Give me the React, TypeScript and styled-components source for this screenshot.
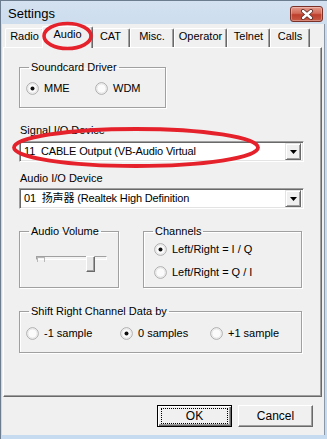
import React, { FC } from 'react'
import styled, { createGlobalStyle } from 'styled-components'

const GlobalStyle = createGlobalStyle`
	html, body {
		margin: 0;
		padding: 0;
		background: #cfdeef;
	}
	body {
		font-family: 'Liberation Sans', Arial, 'Noto Sans CJK SC', sans-serif;
		font-size: 11px;
		color: #000;
	}
`

const Window = styled.div`
	position: relative;
	width: 327px;
	height: 439px;
	box-sizing: border-box;
	display: flex;
	flex-direction: column;
	padding: 0 3px 4px 1px;
	background: linear-gradient(#d3e1f0, #c9daed 40px, #c6dbef);
	border-top: 1px solid #6d7d90;
	border-left: 1px solid #6d7d90;
	overflow: hidden;
`

const TitleBar = styled.div`
	height: 23px;
	display: flex;
	align-items: flex-start;
	justify-content: space-between;
	padding: 0 1px 0 6px;
`

const Title = styled.span`
	margin-top: 5px;
	font-size: 13px;
	line-height: 15px;
	color: #000;
`

const CloseButton = styled.div`
	margin-top: 5px;
	width: 33px;
	height: 16px;
	box-sizing: border-box;
	border: 1px solid #7a3128;
	border-radius: 3px;
	background: linear-gradient(#e49a8b, #d26a58 45%, #bd3f2c 55%, #c85a45);
	box-shadow: inset 0 0 0 1px rgba(255, 255, 255, 0.3);
	display: flex;
	align-items: center;
	justify-content: center;
`

const Client = styled.div`
	flex: 1;
	display: flex;
	flex-direction: column;
	background: #f0f0f0;
	box-shadow: 1px 0 #8a97a6;
`

const TabStrip = styled.div`
	height: 23px;
	display: flex;
	align-items: flex-end;
	padding-left: 3px;
`

const Tab = styled.div<{ $w: number; $active?: boolean }>`
	position: relative;
	box-sizing: border-box;
	width: ${p => p.$w + (p.$active ? 4 : 0)}px;
	height: ${p => (p.$active ? 22 : 19)}px;
	margin: 0 ${p => (p.$active ? -2 : 0)}px ${p => (p.$active ? -1 : 0)}px;
	z-index: ${p => (p.$active ? 2 : 1)};
	padding-top: 1px;
	background: #f0f0f0;
	border-top: 1px solid #fff;
	border-left: 1px solid #fff;
	border-right: 1px solid #696969;
	border-radius: 2px 2px 0 0;
	box-shadow: inset -1px 0 #a0a0a0;
	line-height: 13px;
	text-align: center;
	white-space: nowrap;
`

const TabPage = styled.div`
	height: 350px;
	box-sizing: border-box;
	margin: 0 2px 0 1px;
	padding: 0 0 0 15px;
	border-top: 1px solid #fff;
	border-left: 1px solid #fff;
	border-right: 1px solid #696969;
	border-bottom: 1px solid #696969;
	box-shadow: inset -1px -1px #a0a0a0;
	display: flex;
	flex-direction: column;
	align-items: flex-start;
`

const GroupBox = styled.fieldset<{ $w: number; $top: number }>`
	box-sizing: border-box;
	width: ${p => p.$w}px;
	margin: ${p => p.$top}px 0 0;
	padding: 0;
	min-width: 0;
	border: 1px solid #a0a0a0;
	box-shadow: 1px 1px #fff, inset 1px 1px #fff;
`

const Legend = styled.legend`
	margin-left: 9px;
	padding: 0 2px;
	line-height: 13px;
`

const RadioGrid = styled.div<{ $cols: string; $pt: number; $pb: number }>`
	display: grid;
	grid-template-columns: ${p => p.$cols};
	padding: ${p => p.$pt}px 0 ${p => p.$pb}px ${p => (p.$cols === '1fr' ? 10 : 6)}px;
	row-gap: 10px;
`

const RadioItem = styled.label`
	display: flex;
	align-items: center;
	height: 13px;
	line-height: 13px;
	white-space: nowrap;
`

const RadioDot = styled.svg`
	flex: none;
	margin-right: 5px;
`

const FieldLabel = styled.div<{ $top: number }>`
	margin: ${p => p.$top}px 0 0 1px;
	line-height: 13px;
`

const Combo = styled.div<{ $top: number }>`
	box-sizing: border-box;
	width: 285px;
	height: 21px;
	margin-top: ${p => p.$top}px;
	display: flex;
	align-items: center;
	background: #fff;
	border: 1px solid;
	border-color: #a0a0a0 #fff #fff #a0a0a0;
	box-shadow: inset 1px 1px #696969, inset -1px -1px #e3e3e3;
	padding: 2px 2px 2px 4px;
`

const ComboText = styled.span`
	flex: 1;
	white-space: pre;
	line-height: 13px;
	letter-spacing: -0.15px;
	overflow: hidden;
`

const DropButton = styled.div`
	box-sizing: border-box;
	width: 16px;
	height: 17px;
	background: #f0f0f0;
	border: 1px solid;
	border-color: #e3e3e3 #696969 #696969 #e3e3e3;
	box-shadow: inset 1px 1px #fff, inset -1px -1px #a0a0a0;
	display: flex;
	align-items: center;
	justify-content: center;
`

const GroupRow = styled.div`
	display: flex;
	gap: 24px;
	margin-top: 16px;
`

const SliderBox = styled.div`
	position: relative;
	width: 71px;
	height: 16px;
	margin: 18px 0 8px 16px;
`

const Track = styled.div`
	margin-top: 4px;
	height: 4px;
	box-sizing: border-box;
	border: 1px solid;
	border-color: #a0a0a0 #fff #fff #a0a0a0;
	background: #f4f4f4;
`

const Tick = styled.div`
	position: absolute;
	left: 1px;
	top: 1px;
	width: 6px;
	height: 4px;
	border: 1px solid #b8b8b8;
	border-bottom: none;
`

const Thumb = styled.div`
	position: absolute;
	top: 0;
	width: 9px;
	height: 16px;
	box-sizing: border-box;
	background: #e8e8e8;
	border: 1px solid;
	border-color: #fff #696969 #696969 #fff;
	box-shadow: inset -1px -1px #a0a0a0;
`

const ButtonRow = styled.div`
	display: flex;
	justify-content: flex-end;
	gap: 6px;
	padding: 8px 11px 8px 0;
`

const PushButton = styled.button<{ $default?: boolean }>`
	box-sizing: border-box;
	width: 75px;
	height: 22px;
	padding: 0;
	font-family: inherit;
	font-size: 12px;
	color: #000;
	background: #f0f0f0;
	border: 1px solid;
	border-color: ${p => (p.$default ? '#000' : '#fff #696969 #696969 #fff')};
	box-shadow: ${p =>
		p.$default
			? 'inset 1px 1px #fff, inset -1px -1px #696969, inset -2px -2px #a0a0a0'
			: 'inset -1px -1px #a0a0a0'};
	display: flex;
	align-items: center;
	justify-content: center;
`

const FocusRing = styled.span`
	display: flex;
	align-items: center;
	justify-content: center;
	width: 65px;
	height: 14px;
	border: 1px dotted #000;
`

const Marks = styled.svg`
	position: absolute;
	left: -1px;
	top: -1px;
	pointer-events: none;
	z-index: 5;
`

const Radio: FC<{ label: string; checked?: boolean }> = ({ label, checked }) => (
	<RadioItem>
		<RadioDot width='13' height='13' viewBox='0 0 13 13'>
			<circle cx='6.5' cy='6.5' r='5.8' fill='#fbfbfb' stroke='#a7a7a7' strokeWidth='1' />
			<circle cx='6.5' cy='6.5' r='4.6' fill='none' stroke='#e4e4e4' strokeWidth='1' />
			{checked && <circle cx='6.5' cy='6.5' r='2' fill='#111' />}
		</RadioDot>
		{label}
	</RadioItem>
)

const tabs = [
	{ name: 'Radio', w: 39 },
	{ name: 'Audio', w: 47, active: true },
	{ name: 'CAT', w: 39 },
	{ name: 'Misc.', w: 44 },
	{ name: 'Operator', w: 53 },
	{ name: 'Telnet', w: 43 },
	{ name: 'Calls', w: 40 },
]

const volume = 0.7

const App: FC = () => (
	<>
		<GlobalStyle />
		<Window>
			<TitleBar>
				<Title>Settings</Title>
				<CloseButton>
					<svg width='14' height='11' viewBox='0 0 14 11'>
						<path d='M3 2 L11 9 M11 2 L3 9' stroke='#5a2a24' strokeWidth='4' strokeLinecap='round' />
						<path d='M3 2 L11 9 M11 2 L3 9' stroke='#fff' strokeWidth='2.4' strokeLinecap='round' />
					</svg>
				</CloseButton>
			</TitleBar>
			<Client>
				<TabStrip>
					{tabs.map(t => (
						<Tab key={t.name} $w={t.w} $active={t.active}>
							{t.name}
						</Tab>
					))}
				</TabStrip>
				<TabPage>
					<GroupBox $w={147} $top={13}>
						<Legend>Soundcard Driver</Legend>
						<RadioGrid $cols='69px auto' $pt={8} $pb={12}>
							<Radio label='MME' checked />
							<Radio label='WDM' />
						</RadioGrid>
					</GroupBox>

					<FieldLabel $top={16}>Signal I/O Device</FieldLabel>
					<Combo $top={4}>
						<ComboText>11  CABLE Output (VB-Audio Virtual</ComboText>
						<DropButton>
							<svg width='7' height='4' viewBox='0 0 7 4'>
								<path d='M0 0 H7 L3.5 4 Z' fill='#000' />
							</svg>
						</DropButton>
					</Combo>

					<FieldLabel $top={10}>Audio I/O Device</FieldLabel>
					<Combo $top={3}>
						<ComboText>01  扬声器 (Realtek High Definition</ComboText>
						<DropButton>
							<svg width='7' height='4' viewBox='0 0 7 4'>
								<path d='M0 0 H7 L3.5 4 Z' fill='#000' />
							</svg>
						</DropButton>
					</Combo>

					<GroupRow>
						<GroupBox $w={100} $top={0}>
							<Legend>Audio Volume</Legend>
							<SliderBox>
								<Track />
								<Tick />
								<Thumb style={{ left: `${Math.round(volume * 71)}px` }} />
							</SliderBox>
						</GroupBox>
						<GroupBox $w={159} $top={0}>
							<Legend>Channels</Legend>
							<RadioGrid $cols='1fr' $pt={5} $pb={8}>
								<Radio label='Left/Right = I / Q' checked />
								<Radio label='Left/Right = Q / I' />
							</RadioGrid>
						</GroupBox>
					</GroupRow>

					<GroupBox $w={283} $top={17}>
						<Legend>Shift Right Channel Data by</Legend>
						<RadioGrid $cols='94px 90px auto' $pt={9} $pb={12}>
							<Radio label='-1 sample' />
							<Radio label='0 samples' checked />
							<Radio label='+1 sample' />
						</RadioGrid>
					</GroupBox>
				</TabPage>
				<ButtonRow>
					<PushButton $default>
						<FocusRing>OK</FocusRing>
					</PushButton>
					<PushButton>Cancel</PushButton>
				</ButtonRow>
			</Client>
			<Marks width='327' height='439' viewBox='0 0 327 439'>
				<ellipse cx='67.5' cy='36' rx='23.5' ry='12.5' fill='none' stroke='#e5212b' strokeWidth='3.6' />
				<ellipse cx='136' cy='147.5' rx='122' ry='18.5' fill='none' stroke='#e5212b' strokeWidth='3.8' />
			</Marks>
		</Window>
	</>
)

export default App
